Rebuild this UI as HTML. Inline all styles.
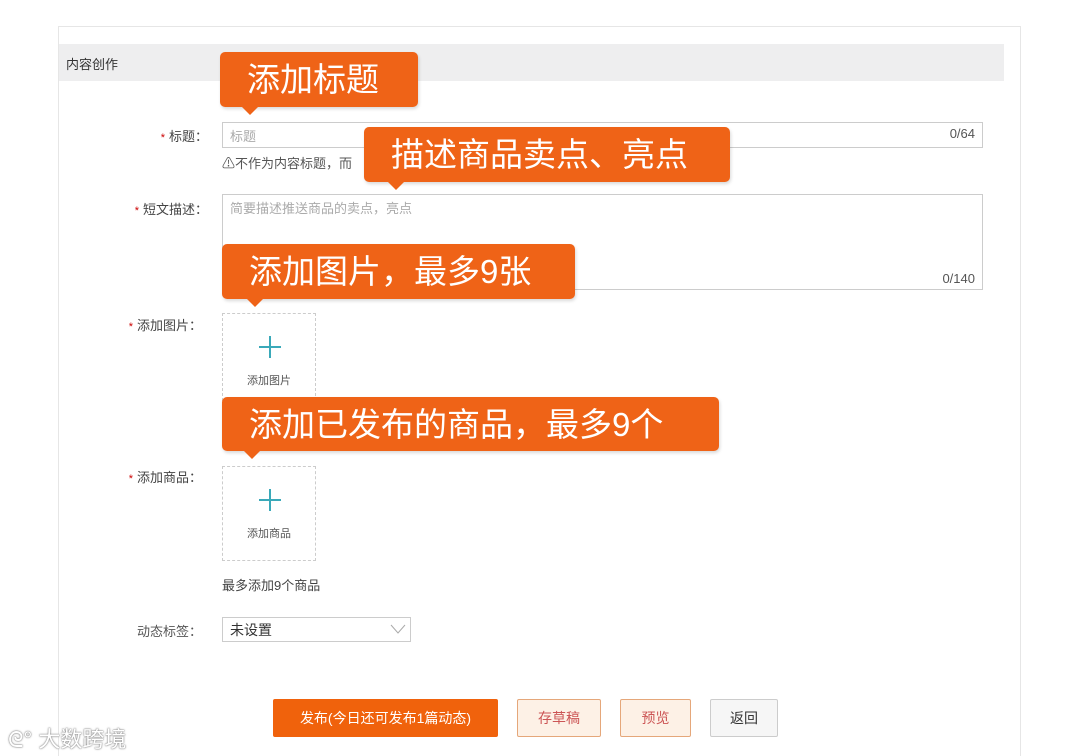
<!DOCTYPE html>
<html style="overflow:hidden;height:756px"><head><meta charset="utf-8"><style>
*{margin:0;padding:0;box-sizing:border-box}
body{width:1080px;height:756px;background:#fff;position:relative;overflow:hidden;font-family:"Liberation Sans","Noto Sans CJK SC",sans-serif;color:#333}
.a{position:absolute}
.panel{left:58px;top:26px;width:963px;height:730px;border:1px solid #e6e6e6;border-bottom:none;background:#fff}
.hdr{left:59px;top:44px;width:945px;height:37px;background:#eeeeef}
.lbl{font-size:13px;color:#444;text-align:right;width:150px}
.lbl b{color:#c00;font-weight:normal;font-size:11px;margin-right:4px}
.inp{border:1px solid #ccc;background:#fff;font-size:13px;color:#aaa;padding:3px 7px}
.tip{background:#ef6317;color:#fff;border-radius:5px;font-size:33px;line-height:55px;padding-left:27px;box-shadow:1px 2px 3px rgba(0,0,0,.15);white-space:nowrap}
.tip:after{content:"";position:absolute;left:var(--ax);bottom:-8px;border-left:8px solid transparent;border-right:8px solid transparent;border-top:8px solid #ef6317}
.box{border:1px dashed #ccc;width:94px;height:93px;text-align:center;font-size:11px;color:#555}
.plus{position:absolute;left:36px;top:22px;width:22px;height:22px}
.plus:before{content:"";position:absolute;left:10px;top:0;width:2px;height:22px;background:#3aa9b9}
.plus:after{content:"";position:absolute;top:10px;left:0;height:2px;width:22px;background:#3aa9b9}
.btn{font-size:14px;text-align:center;border-radius:2px}
</style></head><body>
<div class="a panel"></div>
<div class="a hdr"></div>
<div class="a" style="left:66px;top:54px;font-size:13px;color:#333">内容创作</div>

<div class="a lbl" style="left:58px;top:126px"><b>*</b>标题：</div>
<div class="a inp" style="left:222px;top:122px;width:761px;height:26px">标题<span style="position:absolute;right:7px;top:3px;color:#555">0/64</span></div>
<div class="a" style="left:222px;top:153px;font-size:13px;color:#555">⚠不作为内容标题，而</div>

<div class="a lbl" style="left:58px;top:199px"><b>*</b>短文描述：</div>
<div class="a inp" style="left:222px;top:194px;width:761px;height:96px">简要描述推送商品的卖点，亮点<span style="position:absolute;right:7px;bottom:3px;color:#555">0/140</span></div>

<div class="a lbl" style="left:52px;top:315px"><b>*</b>添加图片：</div>
<div class="a box" style="left:222px;top:313px"><div class="plus"></div><div style="position:absolute;top:58px;width:100%">添加图片</div></div>

<div class="a lbl" style="left:52px;top:467px"><b>*</b>添加商品：</div>
<div class="a box" style="left:222px;top:466px;height:95px"><div class="plus"></div><div style="position:absolute;top:58px;width:100%">添加商品</div></div>
<div class="a" style="left:222px;top:575px;font-size:13px;color:#444">最多添加9个商品</div>

<div class="a lbl" style="left:52px;top:621px;color:#555">动态标签：</div>
<div class="a inp" style="left:222px;top:617px;width:189px;height:25px;color:#333;font-size:14px;padding-top:2px">未设置<svg style="position:absolute;right:4px;top:5px" width="16" height="12"><path d="M1 2 L8 10 L15 2" fill="none" stroke="#aaa"/></svg></div>

<div class="a btn" style="left:273px;top:699px;width:225px;height:38px;line-height:38px;background:#f0620c;color:#fff">发布(今日还可发布1篇动态)</div>
<div class="a btn" style="left:517px;top:699px;width:84px;height:38px;line-height:36px;background:#fdf1e6;border:1px solid #e5a77a;color:#c55">存草稿</div>
<div class="a btn" style="left:620px;top:699px;width:71px;height:38px;line-height:36px;background:#fdf1e6;border:1px solid #e5a77a;color:#c55">预览</div>
<div class="a btn" style="left:710px;top:699px;width:68px;height:38px;line-height:36px;background:#f6f6f6;border:1px solid #ccc;color:#333">返回</div>

<div class="a" style="left:8px;top:722px;font-size:22px;color:#fff;text-shadow:0 0 2px #888,0 0 1px #555">ᘓ° 大数跨境</div>

<div class="a tip" style="left:220px;top:52px;width:198px;height:55px;--ax:22px">添加标题</div>
<div class="a tip" style="left:364px;top:127px;width:366px;height:55px;--ax:24px">描述商品卖点、亮点</div>
<div class="a tip" style="left:222px;top:244px;width:353px;height:55px;--ax:25px">添加图片，最多9张</div>
<div class="a tip" style="left:222px;top:397px;width:497px;height:54px;--ax:22px">添加已发布的商品，最多9个</div>
</body></html>
